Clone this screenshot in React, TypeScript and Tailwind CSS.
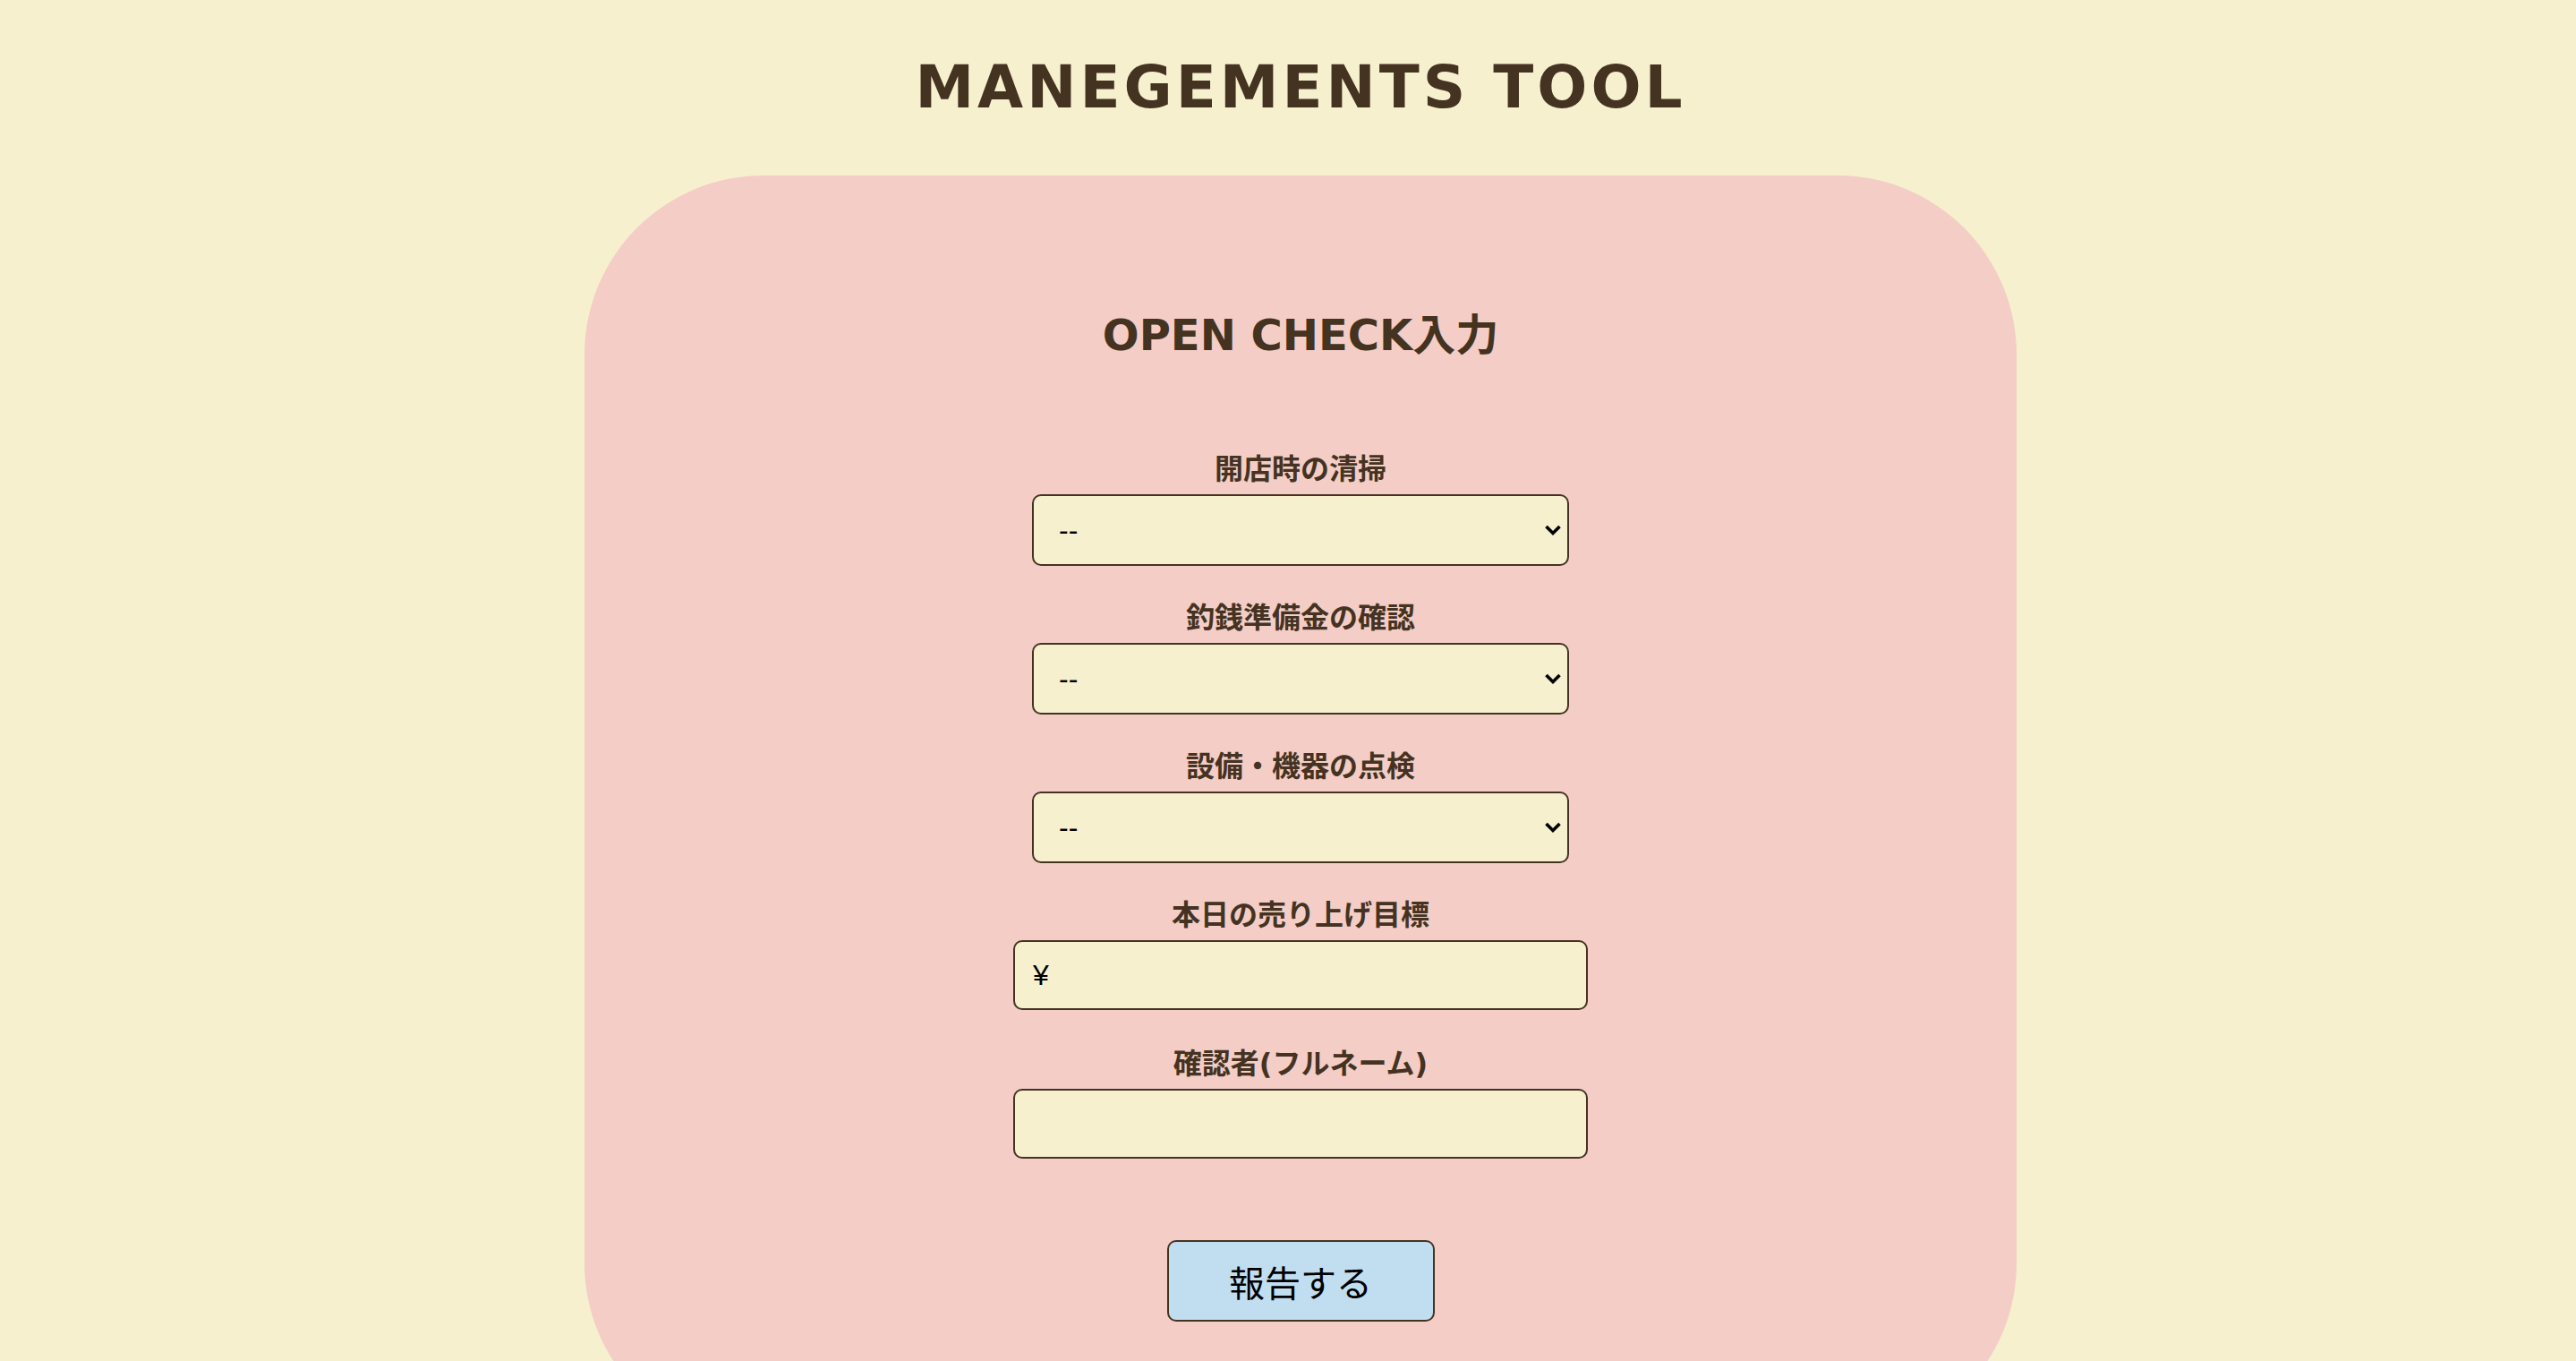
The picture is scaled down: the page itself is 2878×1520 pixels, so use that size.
import React from "react";

const brown = "text-[#453322]";

function Chevron() {
  return (
    <svg
      className="pointer-events-none absolute right-[8px] top-1/2 -translate-y-1/2"
      width="20"
      height="14"
      viewBox="0 0 20 14"
    >
      <path d="M2.5 3 L10 10.5 L17.5 3" fill="none" stroke="#000" strokeWidth="3.6" strokeLinecap="butt" strokeLinejoin="miter" />
    </svg>
  );
}

function SelectField({ label }: { label: string }) {
  return (
    <div className="flex h-[166px] flex-col items-center">
      <label className={`block text-[32px] font-bold leading-[40px] ${brown}`}>{label}</label>
      <div className="relative mt-[8px] w-[600px]">
        <select
          defaultValue=""
          className="h-[80px] w-full appearance-none rounded-[10px] border-2 border-[#453322] bg-[#f6f0cf] pl-[28px] text-[32px] text-black outline-none"
          style={{ fontFamily: '"Liberation Sans", Arial, sans-serif' }}
        >
          <option value="">--</option>
          <option value="ok">OK</option>
          <option value="ng">NG</option>
        </select>
        <Chevron />
      </div>
    </div>
  );
}

function InputField({ label, value, last }: { label: string; value?: string; last?: boolean }) {
  return (
    <div className={`flex flex-col items-center ${last ? "" : "h-[166px]"}`}>
      <label className={`block text-[32px] font-bold leading-[40px] ${brown}`}>{label}</label>
      <input
        type="text"
        defaultValue={value}
        className="mt-[8px] h-[78px] w-[642px] rounded-[10px] border-2 border-[#453322] bg-[#f6f0cf] pl-[20px] text-[32px] text-black outline-none"
        style={{ fontFamily: '"Liberation Sans", Arial, "Noto Sans CJK JP", sans-serif' }}
      />
    </div>
  );
}

export default function App() {
  return (
    <div
      className="flex min-h-screen flex-col items-center bg-[#f6f0cf] pl-[28px]"
      style={{ fontFamily: '"DejaVu Sans", "Noto Sans CJK JP", sans-serif' }}
    >
      <h1 className={`mt-[58px] mb-[58px] text-[66px] font-bold leading-[80px] tracking-[4px] ${brown}`}>
        MANEGEMENTS TOOL
      </h1>
      <div className="flex w-[1600px] flex-col items-center rounded-[200px] bg-[#f4cdc6] pt-[149px] pb-[135px]">
        <h2 className={`text-[48px] font-bold leading-[58px] ${brown}`}>OPEN CHECK入力</h2>
        <form className="mt-[101px] flex flex-col items-center">
          <SelectField label="開店時の清掃" />
          <SelectField label="釣銭準備金の確認" />
          <SelectField label="設備・機器の点検" />
          <InputField label="本日の売り上げ目標" value="¥" />
          <InputField label="確認者(フルネーム)" last />
          <button
            type="button"
            className="mt-[91px] h-[91px] w-[299px] rounded-[10px] border-2 border-[#453322] bg-[#c1def0] text-[40px] text-black"
            style={{ fontFamily: '"Noto Sans CJK JP", sans-serif' }}
          >
            報告する
          </button>
        </form>
      </div>
    </div>
  );
}
